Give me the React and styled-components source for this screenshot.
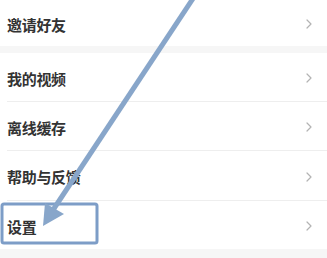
import React from "react";
import styled, { createGlobalStyle } from "styled-components";

const GlobalStyle = createGlobalStyle`
  html, body {
    margin: 0;
    padding: 0;
    background: #ffffff;
  }
  body {
    font-family: "Noto Sans CJK SC", "Noto Sans", sans-serif;
  }
`;

const Page = styled.div`
  position: relative;
  width: 327px;
  height: 258px;
  overflow: hidden;
  background: #f6f6f6;
`;

const Section = styled.div`
  background: #ffffff;
  margin-bottom: ${(p) => p.gap || 0}px;
`;

const Row = styled.div`
  display: flex;
  align-items: center;
  justify-content: space-between;
  height: ${(p) => p.height || 49}px;
  padding: 2px 15px 0 7px;
  box-sizing: border-box;
  border-bottom: ${(p) => (p.divider ? "1px solid #efefef" : "none")};
  margin-left: 0;
`;

const Divider = styled.div`
  height: 1px;
  margin-left: 7px;
  background: #eeeeee;
`;

const Label = styled.span`
  font-size: 15px;
  font-weight: 700;
  color: #333333;
  letter-spacing: -0.3px;
`;

const Overlay = styled.svg`
  position: absolute;
  left: 0;
  top: 0;
  pointer-events: none;
`;

function Chevron() {
  return (
    <svg width="6" height="10" viewBox="0 0 6 10">
      <polyline
        points="1,1 5,5 1,9"
        fill="none"
        stroke="#b3b3b3"
        strokeWidth="1.2"
        strokeLinecap="round"
        strokeLinejoin="round"
      />
    </svg>
  );
}

const groups = [
  { items: ["邀请好友"], first: true },
  { items: ["我的视频", "离线缓存", "帮助与反馈", "设置"] },
];

export default function App() {
  return (
    <>
      <GlobalStyle />
      <Page>
        {groups.map((group, gi) => (
          <Section key={gi} gap={gi === 0 ? 7 : 8}>
            {group.items.map((item, i) => (
              <React.Fragment key={item}>
                {i > 0 && <Divider />}
                <Row height={group.first ? 46 : i === 2 ? 49 : 48}>
                  <Label>{item}</Label>
                  <Chevron />
                </Row>
              </React.Fragment>
            ))}
          </Section>
        ))}
        <Overlay width="327" height="258" viewBox="0 0 327 258">
          <rect
            x="2"
            y="204"
            width="95"
            height="39"
            rx="2"
            fill="none"
            stroke="#7d9dc7"
            strokeWidth="3"
          />
          <line
            x1="194"
            y1="-3"
            x2="53"
            y2="210"
            stroke="#88a6ca"
            strokeWidth="5"
          />
          <polygon points="43,226 45,203 64,214" fill="#88a6ca" />
        </Overlay>
      </Page>
    </>
  );
}
